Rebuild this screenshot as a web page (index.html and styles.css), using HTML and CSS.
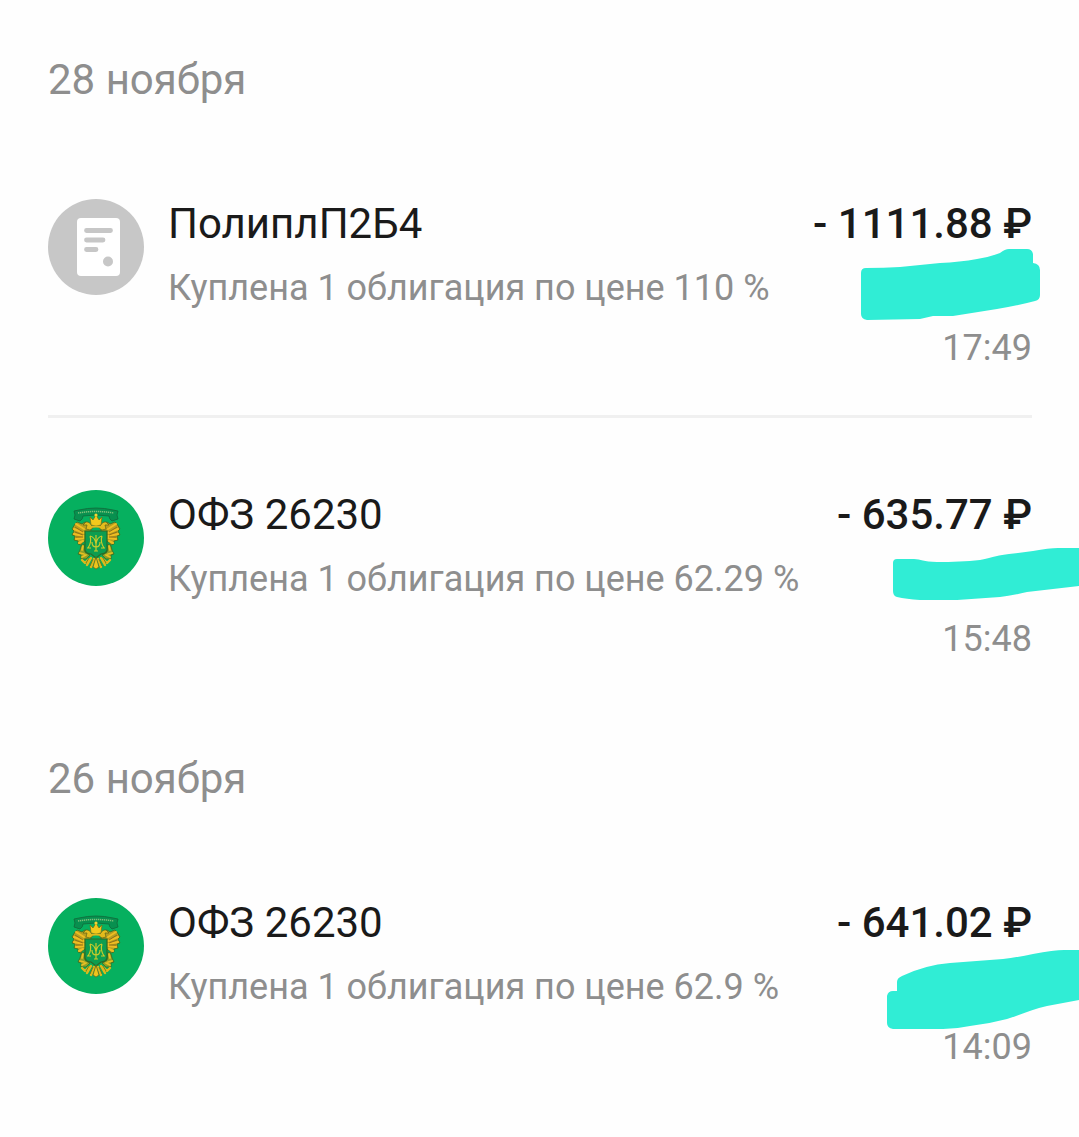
FILE: index.html
```html
<!DOCTYPE html>
<html lang="ru">
<head>
    <meta charset="UTF-8">
    <meta name="viewport" content="width=device-width, initial-scale=1.0">
    <title>Операции</title>
    <link rel="stylesheet" href="styles.css">
</head>
<body>
    <!-- Shared emblem for the OFZ bonds -->
    <svg class="sprite" aria-hidden="true">
        <symbol id="ofz" viewBox="0 0 96 96">
            <circle cx="48" cy="48" r="48" fill="#06b05f"/>
            <!-- ribbon -->
            <path d="M26 21l5-1q17-4 34 0l5 1-1 4 1 4-6 2q-3-2-3-5-13-2-26 0 0 3-3 5l-6-2 1-4z" fill="#08904f" stroke="#12683a" stroke-width=".8"/>
            <path d="M30 23q18-3 36 0" fill="none" stroke="#7fc07a" stroke-width="1.5" stroke-dasharray="1.3 .7"/>
            <!-- wings -->
            <g id="wing">
                <path d="M43 40l-2-7-4-1-3 2-5-2-2 2-3 5 2 2-2 4 3 1-1 4 4 1 0 3 3 1 2-3 5-2z" fill="#b89f20" stroke="#3d6a20" stroke-width=".8"/>
                <path d="M28 34l8 5M26 39l10 4M26 44l10 2M28 49l8-1M31 53l4-2" stroke="#efbd22" stroke-width="2" stroke-linecap="round"/>
                <path d="M27 37l8 5M27 42l8 3M28 47l7 0" stroke="#8c6a17" stroke-width=".9"/>
                <path d="M45 38q-3-7-7-6l-3 3 4 0-1 4 4 1z" fill="#e5bd1d" stroke="#5d6318" stroke-width=".7"/>
                <!-- claws -->
                <path d="M36 54l-3 2-1 4-2 4 3 1 0 4 5 0 4-4-5-3z" fill="#8fa026" stroke="#3d6a20" stroke-width=".8"/>
                <path d="M35 56l-1 4M32 63l4 1M34 67l4-2" stroke="#e8bf22" stroke-width="1.800" stroke-linecap="round"/>
                <path d="M34 70l3 3 4-4M43 68l-4 7M46 69l-3 8" fill="none" stroke="#dcb91c" stroke-width="2.400" stroke-linecap="round" stroke-linejoin="round"/>
                <path d="M41 68l-3 5M45 69l-3 7" stroke="#5f7019" stroke-width=".8"/>
            </g>
            <use href="#wing" transform="matrix(-1 0 0 1 96 0)"/>
            <!-- crown -->
            <path d="M42 27l3 3 3-5 3 5 3-3-1 8q-5 2-10 0z" fill="#f2c91c" stroke="#746c16" stroke-width=".7"/>
            <circle cx="48" cy="25" r="1.600" fill="#f5d431"/>
            <path d="M40 38q8-3 16 0" fill="none" stroke="#e0b91c" stroke-width="2"/>
            <!-- shield -->
            <path d="M37 41h22v19q-1 4-6 4l-5 4-5-4q-5 0-6-4z" fill="#0c9d50" stroke="#2c6b26" stroke-width="1.200"/>
            <path d="M42 46q2 6-2 12M54 46q-2 6 2 12M42 46q5 1 6 8 1-7 6-8M48 45v16M44 52q0 5 4 5t4-5M39 58h4M53 58h4M46 61h4" fill="none" stroke="#c9cb2b" stroke-width="1.200"/>
            <!-- tail -->
            <path d="M48 67l-3 10 3 2 3-2z" fill="#edc51d" stroke="#685f17" stroke-width=".7"/>
        </symbol>
    </svg>

    <main class="history">
        <section class="day">
            <h2 class="date">28 ноября</h2>
            <ul class="trades">
                <li class="trade">
                    <svg class="logo" viewBox="0 0 96 96" aria-hidden="true">
                        <circle cx="48" cy="48" r="48" fill="#c7c7c7"/>
                        <rect x="29" y="19" width="43" height="58" rx="4" fill="#fff"/>
                        <path d="M38.5 31.5h24M38.5 41h16.5M38.5 50.5h9.5" stroke="#c7c7c7" stroke-width="4.8" stroke-linecap="round"/>
                        <circle cx="60" cy="62.5" r="5" fill="#c7c7c7"/>
                    </svg>
                    <div class="info">
                        <h3 class="name">ПолиплП2Б4</h3>
                        <p class="note">Куплена 1 облигация по цене 110 %</p>
                    </div>
                    <div class="sum">
                        <strong class="amount">- 1111.88 ₽</strong>
                        <svg class="marker" viewBox="0 0 220 90" aria-hidden="true">
                            <path d="M2 25Q2 20 7 20Q25 20 41 19L81 15Q101 14 118 11Q131 9 141 5Q146 1 150 1L168 1Q173 1 174 6V15Q181 16 181 22V47Q181 52 176 53Q157 58 138 61L94 68L74 68L61 71L8 72Q2 71 2 66Z"/>
                        </svg>
                        <time class="time">17:49</time>
                    </div>
                </li>
                <li class="trade">
                    <svg class="logo" aria-hidden="true"><use href="#ofz"/></svg>
                    <div class="info">
                        <h3 class="name">ОФЗ 26230</h3>
                        <p class="note">Куплена 1 облигация по цене 62.29 %</p>
                    </div>
                    <div class="sum">
                        <strong class="amount">- 635.77 ₽</strong>
                        <svg class="marker" viewBox="0 0 220 90" aria-hidden="true">
                            <path d="M34 24Q34 20 38 20H55C62 20 64 23 78 23Q101 23 121 21C135 18 140 16 150 15L174 12Q190 9 199 9H220V47L168 53Q152 57 141 58L98 61H61Q47 60 38 58Q34 57 34 52Z"/>
                        </svg>
                        <time class="time">15:48</time>
                    </div>
                </li>
            </ul>
        </section>

        <section class="day">
            <h2 class="date">26 ноября</h2>
            <ul class="trades">
                <li class="trade">
                    <svg class="logo" aria-hidden="true"><use href="#ofz"/></svg>
                    <div class="info">
                        <h3 class="name">ОФЗ 26230</h3>
                        <p class="note">Куплена 1 облигация по цене 62.9 %</p>
                    </div>
                    <div class="sum">
                        <strong class="amount">- 641.02 ₽</strong>
                        <svg class="marker" viewBox="0 0 220 90" aria-hidden="true">
                            <path d="M28 49Q29 44 34 44H38V35Q38 31 43 29Q66 18 91 16L144 12Q160 10 174 7Q195 3 205 3H220V53L188 59C174 62 161 68 148 72Q129 77 111 79Q97 82 84 82H34Q28 81 28 76Z"/>
                        </svg>
                        <time class="time">14:09</time>
                    </div>
                </li>
            </ul>
        </section>
    </main>
</body>
</html>
```
FILE: styles.css
```css
* {
    margin: 0;
    padding: 0;
    box-sizing: border-box;
}

body {
    background: #fefefe;
    color: #1a1a1a;
    font-family: Roboto, "Liberation Sans", sans-serif;
    overflow-x: hidden;
}

.sprite {
    position: absolute;
    width: 0;
    height: 0;
}

.history {
    padding: 7px 47px 7px 48px;
}

.date {
    padding: 48px 0 22px;
    color: #8e8e8e;
    font-size: 42px;
    font-weight: 400;
    line-height: 50px;
}

.trades {
    list-style: none;
}

.trade {
    display: flex;
    align-items: flex-start;
    padding: 72px 0 37px;
}

.trade + .trade {
    border-top: 3px solid #f0f0f0;
}

.logo {
    flex: none;
    width: 96px;
    height: 96px;
    margin-right: 24px;
}

.info {
    flex: 1;
    min-width: 0;
}

.name,
.amount {
    display: block;
    margin-bottom: 9px;
    font-size: 42px;
    line-height: 50px;
}

.name {
    font-weight: 400;
}

.amount {
    font-weight: 500;
}

.note,
.time {
    color: #8e8e8e;
    font-size: 36px;
    line-height: 60px;
}

.sum {
    display: flex;
    flex-direction: column;
    align-items: flex-end;
    position: relative;
    white-space: nowrap;
}

.time {
    margin-top: 60px;
}

/* highlighter stroke over the hidden line, runs to the screen edge */
.marker {
    position: absolute;
    top: 49px;
    right: -47px;
    width: 220px;
    height: 90px;
    fill: #30edd5;
}
```
